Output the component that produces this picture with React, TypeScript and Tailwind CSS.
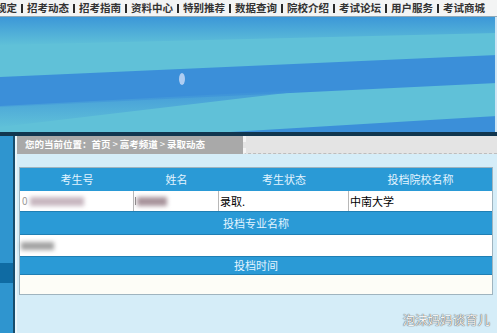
import React from "react";

const navItems = ["规定", "招考动态", "招考指南", "资料中心", "特别推荐", "数据查询", "院校介绍", "考试论坛", "用户服务", "考试商城"];

function Banner() {
  return (
    <svg width="497" height="115" viewBox="0 0 497 115" className="block">
      <defs>
        <linearGradient id="gTop" x1="0" y1="0" x2="0" y2="1">
          <stop offset="0" stopColor="#3c97d8" />
          <stop offset="1" stopColor="#5fc0d8" />
        </linearGradient>
        <linearGradient id="gFade" x1="0" y1="0" x2="0" y2="1">
          <stop offset="0" stopColor="#3b8fd9" />
          <stop offset="1" stopColor="#5fc0d8" />
        </linearGradient>
      </defs>
      <rect x="0" y="0" width="497" height="115" fill="#60c1d8" />
      <polygon points="0,0 497,0 497,16 0,28" fill="url(#gTop)" />
      <polygon points="0,60 497,38 497,66 0,90" fill="#3b8fd9" />
      <polygon points="0,89 320,72 0,110" fill="url(#gFade)" opacity="0.8" />
      <polygon points="230,115 497,99 497,115" fill="#3b8fd9" />
      <ellipse cx="182" cy="62" rx="3" ry="6" fill="#aecdf2" />
      <rect x="495" y="0" width="2" height="115" fill="#cfe6f4" />
    </svg>
  );
}

export default function App() {
  return (
    <div className="relative w-[497px] h-[333px] overflow-hidden bg-[#d5edf8] font-['Noto_Sans_CJK_SC','Noto_Sans',sans-serif]">
      {/* top nav */}
      <div className="h-[17px] bg-[#f3f4f4] border-b border-[#8fa9b8] flex items-center overflow-hidden">
        <div className="flex items-center ml-[-4px] text-[10.5px] leading-none font-bold text-[#333] whitespace-nowrap">
          {navItems.map((t, i) => (
            <React.Fragment key={t}>
              {i > 0 && (
                <span className="w-[10px] flex justify-center">
                  <span className="block w-[2px] h-[9px] bg-[#2a2a2a]" />
                </span>
              )}
              <span>{t}</span>
            </React.Fragment>
          ))}
        </div>
      </div>

      <Banner />
      <div className="h-[4px] bg-[#11364f]" />

      <div className="flex h-[197px]">
        {/* sidebar */}
        <div className="w-[13px] flex flex-col bg-[#2f95cf]">
          <div className="h-[127px]" />
          <div className="h-[20px] bg-[#0f6ba3]" />
        </div>
        <div className="w-[2px] bg-[#174d6d]" />
        <div className="w-[2px] bg-[#eaf6fb]" />

        {/* main */}
        <div className="flex-1 flex flex-col">
          <div className="flex h-[18px]">
            <div className="w-[226px] bg-[#a9a9a9] flex items-center pl-[8px] text-[9.5px] leading-none font-bold text-white whitespace-nowrap">
              <span>您的当前位置：首页</span>
              <span className="mx-[2px] font-normal">&gt;</span>
              <span>高考频道</span>
              <span className="mx-[2px] font-normal">&gt;</span>
              <span>录取动态</span>
            </div>
            <div className="flex-1 bg-[#e4e4e4] border-l-[3px] border-[#f4f4f4] border-b border-b-[#bdbdbd] border-dashed" />
          </div>
          <div className="h-[13px]" />

          {/* table */}
          <div className="ml-[2px] w-[474px] border border-[#9fb4bf] text-[11px] leading-none">
            <div className="flex h-[23px] bg-[#2a9ad6] text-[#e2f4ff]">
              <div className="w-[114px] flex items-center justify-center">考生号</div>
              <div className="w-[85px] flex items-center justify-center">姓名</div>
              <div className="w-[130px] flex items-center justify-center">考生状态</div>
              <div className="flex-1 flex items-center justify-center">投档院校名称</div>
            </div>
            <div className="flex h-[20px] bg-white text-black">
              <div className="w-[114px] border-r border-[#b8b8b8] flex items-center pl-[2px] gap-[2px]">
                <span className="text-[#999] text-[10px]">0</span>
                <div className="w-[54px] h-[9px] bg-[#c8b7c0] blur-[2px]" />
              </div>
              <div className="w-[85px] border-r border-[#b8b8b8] flex items-center pl-[1px] gap-[1px]">
                <div className="w-[1px] h-[8px] bg-[#888]" />
                <div className="w-[30px] h-[9px] bg-[#a8949c] blur-[2px]" />
              </div>
              <div className="w-[130px] border-r border-[#b8b8b8] flex items-center pl-[1px]">录取.</div>
              <div className="flex-1 flex items-center pl-[1px]">中南大学</div>
            </div>
            <div className="h-[24px] bg-[#2a9ad6] border-y border-[#1f7fb4] text-[#e2f4ff] flex items-center justify-center">
              投档专业名称
            </div>
            <div className="h-[21px] bg-white flex items-center">
              <div className="ml-[1px] w-[33px] h-[8px] bg-[#a2a2a2] blur-[2px]" />
            </div>
            <div className="h-[19px] bg-[#2a9ad6] border-y border-[#1f7fb4] text-[#e2f4ff] flex items-center justify-center">
              投档时间
            </div>
            <div className="h-[19px] bg-[#fdfdf7]" />
          </div>
        </div>
      </div>

      <div className="absolute right-[7px] bottom-[7px] text-[12.5px] leading-none text-[#f2f2f2] [text-shadow:0_0_1px_#555,0_0_1px_#555] font-['Noto_Sans_CJK_SC',sans-serif]">
        泡沫妈妈谈育儿
      </div>
    </div>
  );
}
